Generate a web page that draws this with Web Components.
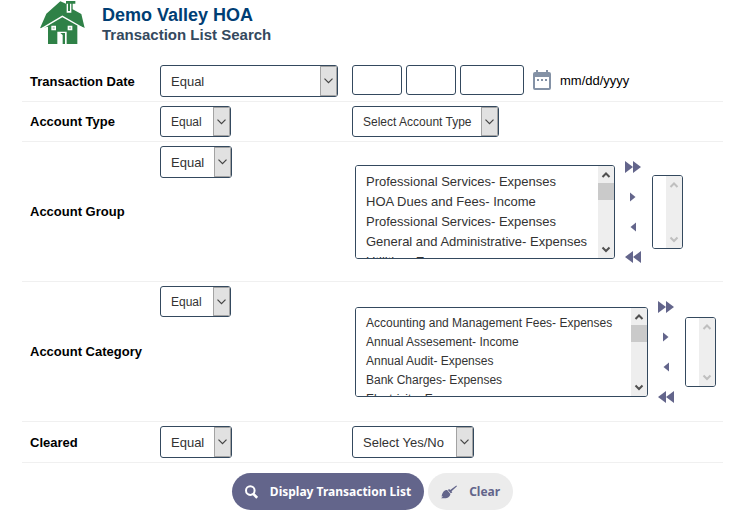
<!DOCTYPE html>
<html lang="en">
<head>
<meta charset="utf-8">
<title>Transaction List Search</title>
<style>
  body { margin: 0; background: #fff; color: #000; font-family: "Liberation Sans", Arial, sans-serif; font-size: 13px; }
</style>
</head>
<body>
<transaction-search>
  <page-header slot="header" heading="Demo Valley HOA" subheading="Transaction List Search"></page-header>
  <search-row label="Transaction Date" wide><date-fields></date-fields></search-row>
  <search-row label="Account Type" compact><drop-down label="Account Type value" options="Select Account Type" compact></drop-down></search-row>
  <search-row label="Account Group" tall>
    <transfer-list label="Account groups" options="Professional Services- Expenses|HOA Dues and Fees- Income|Professional Services- Expenses|General and Administrative- Expenses|Utilities- Expenses"></transfer-list>
  </search-row>
  <search-row label="Account Category" tall compact>
    <transfer-list compact label="Account categories" options="Accounting and Management Fees- Expenses|Annual Assesement- Income|Annual Audit- Expenses|Bank Charges- Expenses|Electricity- Expenses"></transfer-list>
  </search-row>
  <search-row label="Cleared"><drop-down label="Cleared value" options="Select Yes/No"></drop-down></search-row>
  <pill-button slot="actions" icon="search" primary>Display Transaction List</pill-button>
  <pill-button slot="actions" icon="brush">Clear</pill-button>
</transaction-search>

<script>
const optionTags = list => list.split('|').map(o => `<option>${o}</option>`).join('');

const selectStyles = `
  .select { display: inline-grid; grid-template-columns: 1fr 17px; border: 1px solid #34495e; border-radius: 3px; height: 30px; background: #fff; overflow: hidden; }
  .select select { grid-area: 1 / 1 / 2 / 3; appearance: none; border: 0; margin: 0; background: transparent; color: #333; font: inherit; padding: 0 28px 0 10px; border-radius: 0; }
  .select span { grid-area: 1 / 2; display: grid; place-items: center; background: #e1e1e1; border: 1px solid #a3a3a3; pointer-events: none; }
  :host([compact]) .select { height: 29px; font-size: 12px; }
  :host([compact]) .select select { padding-right: 25px; }
`;
const selectMarkup = (id, options) => `
  <div class="select"><select id="${id}">${optionTags(options)}</select>
  <span><svg width="9" height="6" viewBox="0 0 9 6" fill="none" stroke="#444" stroke-width="1.2"><path d="M.5 .7 4.5 4.7 8.5 .7"/></svg></span></div>`;

class TransactionSearch extends HTMLElement {
  constructor() {
    super();
    this.attachShadow({ mode: 'open' }).innerHTML = `
      <style>
        :host { display: block; padding: 0 9px 0 22px; }
        form { display: block; }
        .actions { display: flex; justify-content: center; gap: 4px; padding-top: 10px; }
      </style>
      <slot name="header"></slot>
      <form><slot></slot><div class="actions"><slot name="actions"></slot></div></form>`;
  }
}

class PageHeader extends HTMLElement {
  connectedCallback() {
    this.attachShadow({ mode: 'open' }).innerHTML = `
      <style>
        :host { display: flex; gap: 14px; padding-left: 13px; height: 61px; align-items: flex-start; }
        .titles { padding-top: 5px; }
        h1, h2 { margin: 0; font-weight: bold; }
        h1 { font-size: 18px; line-height: 20px; color: #003e74; }
        h2 { font-size: 15px; line-height: 20px; color: #34495e; }
      </style>
      <svg width="53" height="45" viewBox="0 0 159 135" role="img" aria-label="House">
        <path fill="#2f8147" d="M15 85 34 41 76 4 93 11V3H121V11H113V28L139 42 149 84 127 76V132H39V80Z"/>
        <path fill="none" stroke="#fff" stroke-width="4" d="M15 89 82 49 149 87"/>
        <path fill="#fff" d="M95 11H99V33H105V11H109V38H95Z"/>
        <path fill="#fff" d="M49 77H63V91H49ZM98 77H112V91H98ZM67 132V95H95V132H90V99H76L83 105V132H71V132Z"/>
        <path stroke="#2f8147" stroke-width="2" d="M53 84H59M102 84H108"/>
      </svg>
      <div class="titles"><h1>${this.getAttribute('heading')}</h1><h2>${this.getAttribute('subheading')}</h2></div>`;
  }
}

class SearchRow extends HTMLElement {
  connectedCallback() {
    this.attachShadow({ mode: 'open' }).innerHTML = `
      <style>
        ${selectStyles}
        :host { display: grid; grid-template-columns: 130px 192px 1fr; align-items: center; padding: 4px 0 4px 8px; border-bottom: 1px solid #f0f0f0; }
        :host([tall]) { min-height: 131px; }
        label { font-weight: bold; }
        .operator { align-self: start; display: flex; }
        .select { width: 70px; }
        .select select { padding-right: 20px; }
        :host([compact]) .select { width: 69px; }
        :host([wide]) .select { width: 176px; }
      </style>
      <label for="op">${this.getAttribute('label')}</label>
      <div class="operator">${selectMarkup('op', 'Equal')}</div>
      <slot></slot>`;
  }
}

class DropDown extends HTMLElement {
  connectedCallback() {
    this.attachShadow({ mode: 'open' }).innerHTML = `
      <style>:host { display: flex; } ${selectStyles}</style>${selectMarkup('value', this.getAttribute('options'))}`;
    this.shadowRoot.querySelector('select').setAttribute('aria-label', this.getAttribute('label'));
  }
}

class DateFields extends HTMLElement {
  constructor() {
    super();
    this.attachShadow({ mode: 'open' }).innerHTML = `
      <style>
        :host { display: flex; gap: 4px; align-self: start; align-items: center; }
        input { box-sizing: border-box; width: 50px; height: 30px; border: 1px solid #34495e; border-radius: 3px; padding: 0 8px; font: inherit; color: #333; margin: 0; }
        .year { width: 64px; }
        button { border: 0; background: none; padding: 0; margin: 0 5px; display: flex; }
      </style>
      <input aria-label="Month"><input aria-label="Day"><input class="year" aria-label="Year">
      <button type="button" aria-label="Open calendar"><svg width="18" height="20" viewBox="0 0 18 20">
        <path fill="#8492a6" fill-rule="evenodd" d="M3 0H5V2H13V0H15V2H16Q18 2 18 4V18Q18 20 16 20H2Q0 20 0 18V4Q0 2 2 2H3ZM2 7V18H16V7Z"/>
        <path fill="#8492a6" d="M4 9H6V11H4ZM8 9H10V11H8ZM12 9H14V11H12Z"/></svg></button>
      <span>mm/dd/yyyy</span>`;
  }
}

class ScrollTrack extends HTMLElement {
  constructor() {
    super();
    this.attachShadow({ mode: 'open' }).innerHTML = `
      <style>
        :host { display: flex; flex-direction: column; width: 16px; background: #eee; color: #505050; }
        :host([disabled]) { color: #bfbfbf; }
        :host([disabled]) .thumb { visibility: hidden; }
        svg { flex: none; fill: none; stroke: currentColor; stroke-width: 2; }
        .thumb { height: 17px; background: #cacaca; }
        .rest { flex: 1; }
      </style>
      <svg width="16" height="17"><path d="M4.5 11 8 7.5 11.5 11"/></svg><div class="thumb"></div><div class="rest"></div>
      <svg width="16" height="17"><path d="M4.5 6.5 8 10 11.5 6.5"/></svg>`;
  }
}

class TransferList extends HTMLElement {
  connectedCallback() {
    const label = this.getAttribute('label');
    this.attachShadow({ mode: 'open' }).innerHTML = `
      <style>
        :host { display: flex; align-items: center; padding-left: 3px; }
        .list { box-sizing: border-box; display: flex; height: 94px; border: 1px solid #34495e; border-radius: 3px; overflow: hidden; }
        .list.chosen { height: 74px; }
        select { appearance: none; border: 0; margin: 0; padding: 8px 10px 0; font: inherit; color: #333; background: #fff; width: 242px; height: 100%; box-sizing: border-box; scrollbar-width: none; border-radius: 0; outline: 0; overflow: hidden; }
        .chosen select { width: 13px; padding: 0; }
        option { padding: 0; min-height: 20px; line-height: 20px; }
        :host([compact]) { font-size: 12px; }
        :host([compact]) .list { height: 90px; }
        :host([compact]) .chosen { height: 70px; }
        :host([compact]) select { width: 275px; }
        :host([compact]) .chosen select { width: 13px; }
        :host([compact]) option { min-height: 19px; line-height: 19px; }
        .moves { display: grid; grid-auto-rows: 30px; padding: 0 11px 0 10px; }
        button { border: 0; background: none; padding: 0; display: grid; place-items: center; }
        svg { fill: #63658b; }
      </style>
      <div class="list"><select multiple aria-label="${label}">${optionTags(this.getAttribute('options'))}</select><scroll-track></scroll-track></div>
      <div class="moves">
        <button type="button" aria-label="Add all"><svg width="16" height="12"><path d="M0 0 8 6V0L16 6 8 12V6L0 12Z"/></svg></button>
        <button type="button" aria-label="Add selected"><svg width="16" height="12"><path d="M5 1.5 10.5 6 5 10.5Z"/></svg></button>
        <button type="button" aria-label="Remove selected"><svg width="16" height="12"><path d="M11 1.5 5.5 6 11 10.5Z"/></svg></button>
        <button type="button" aria-label="Remove all"><svg width="16" height="12"><path d="M16 0 8 6V0L0 6 8 12V6L16 12Z"/></svg></button>
      </div>
      <div class="list chosen"><select multiple aria-label="${label}, chosen"></select><scroll-track disabled></scroll-track></div>`;
  }
}

const icons = {
  search: '<svg width="13" height="14" viewBox="0 0 13 14" fill="none" stroke="currentColor"><circle cx="5.3" cy="5.6" r="4.3" stroke-width="2"/><path stroke-width="2.6" d="M8.3 8.8 12.2 12.8"/></svg>',
  brush: '<svg width="16" height="14" viewBox="0 0 17 14" fill="currentColor"><path d="M16.3 0 17 .8 11.200 6.300 12 7.500 10.300 8.200 7.300 4.800 8.600 3.700 9.800 4.800ZM6.500 5 10 9C9.500 12.800 6 14 0 13.700L2.300 11.700 .6 11.900C1.500 7.800 3 5 6.500 5Z"/></svg>'
};

class PillButton extends HTMLElement {
  connectedCallback() {
    this.attachShadow({ mode: 'open' }).innerHTML = `
      <style>
        :host { display: block; }
        button { display: flex; align-items: center; gap: 12px; height: 37px; padding: 0 13px; border: 0; border-radius: 19px; background: #ececec; color: #63658b; font: bold 12px "Noto Sans", "Open Sans", sans-serif; }
        :host([primary]) button { background: #63658b; color: #fff; }
      </style>
      <button type="button">${icons[this.getAttribute('icon')]}<slot></slot></button>`;
  }
}

customElements.define('scroll-track', ScrollTrack);
customElements.define('drop-down', DropDown);
customElements.define('date-fields', DateFields);
customElements.define('transfer-list', TransferList);
customElements.define('pill-button', PillButton);
customElements.define('page-header', PageHeader);
customElements.define('search-row', SearchRow);
customElements.define('transaction-search', TransactionSearch);
</script>
</body>
</html>
